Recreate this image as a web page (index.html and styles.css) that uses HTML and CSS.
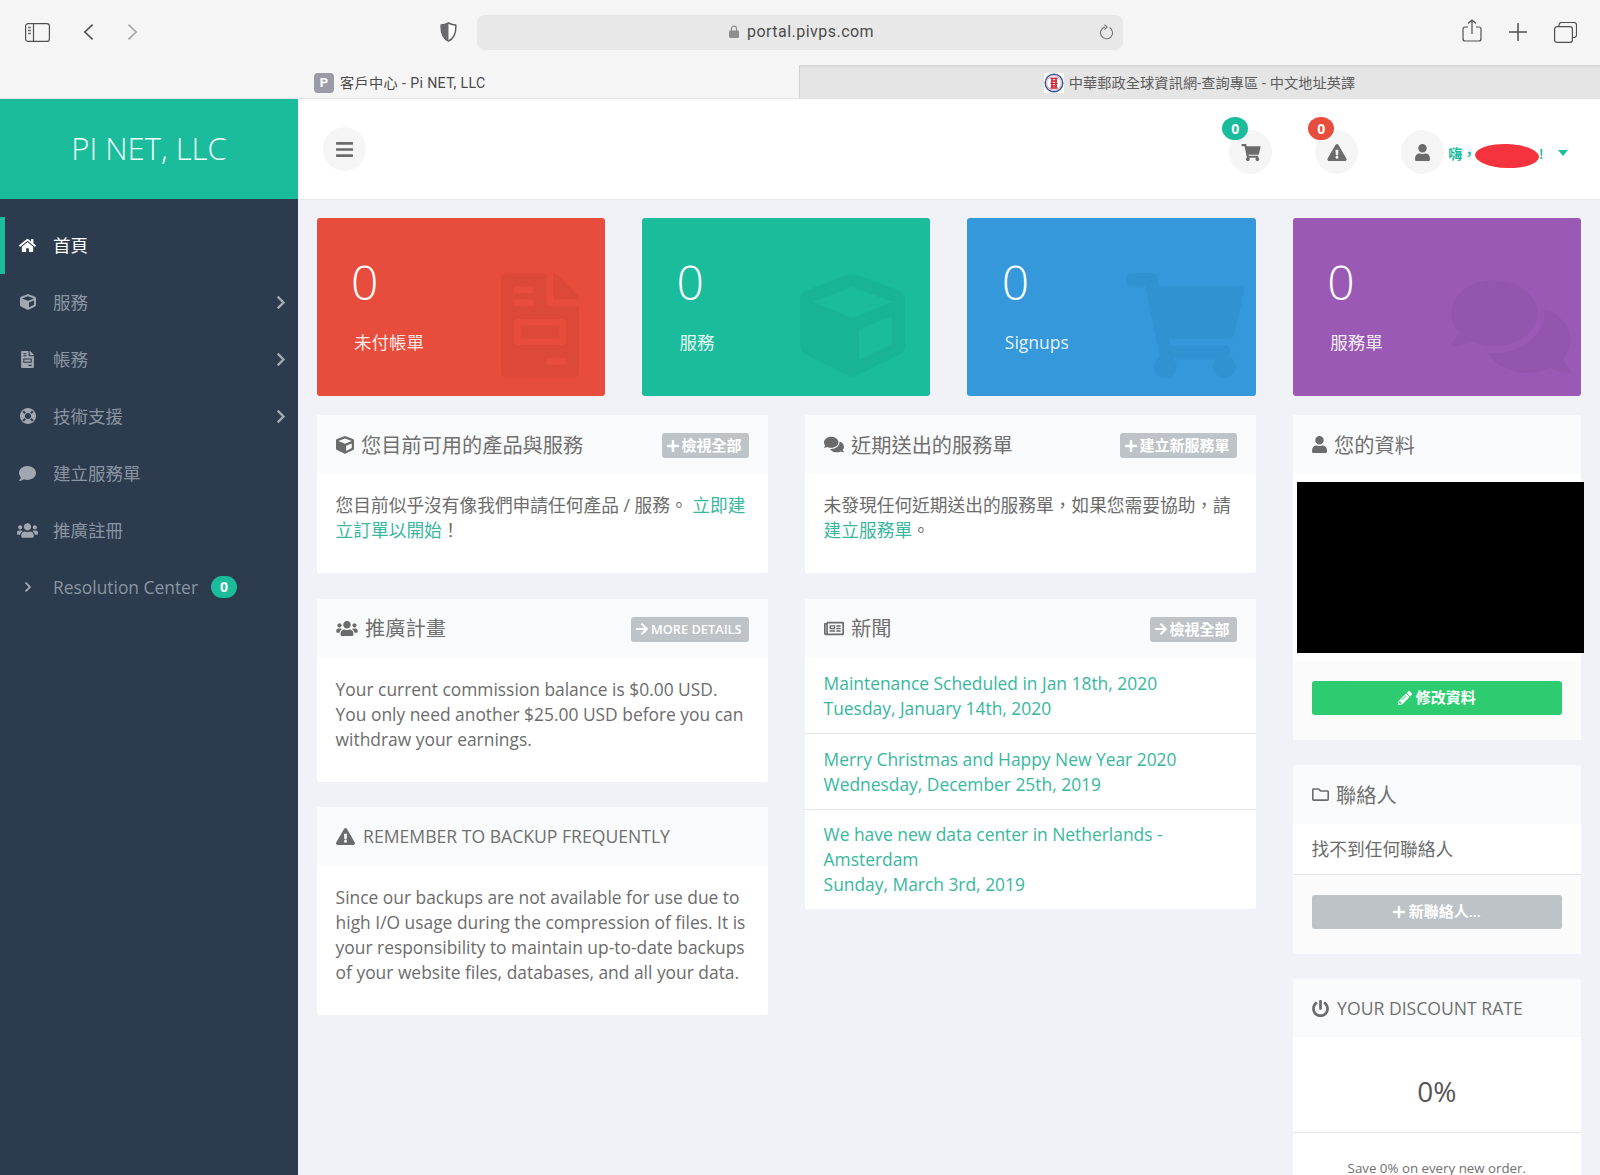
FILE: index.html
```html
<!DOCTYPE html>
<html lang="zh-Hant">
<head>
<meta charset="utf-8">
<title>客戶中心 - Pi NET, LLC</title>
<link rel="stylesheet" href="styles.css">
</head>
<body>
<svg class="defs" xmlns="http://www.w3.org/2000/svg">
  <symbol id="i-cube" viewBox="0 0 512 512"><path d="M239.1 6.3l-208 78c-18.7 7-31.1 25-31.1 45v225.1c0 18.2 10.3 34.8 26.5 42.9l208 104c13.5 6.8 29.4 6.8 42.9 0l208-104c16.3-8.1 26.5-24.8 26.5-42.9V129.3c0-20-12.4-37.9-31.1-44.9l-208-78C262 2.2 250 2.2 239.1 6.3zM256 68.4l192 72v1.1l-192 78-192-78v-1.1l192-72zm32 356V275.5l160-65v133.9l-160 80z"/></symbol>
  <symbol id="i-invoice" viewBox="0 0 384 512"><path d="M288 256H96v64h192v-64zm89-151L279.1 7c-4.5-4.5-10.6-7-17-7H256v128h128v-6.1c0-6.3-2.5-12.4-7-16.9zm-153 31V0H24C10.7 0 0 10.7 0 24v464c0 13.3 10.7 24 24 24h336c13.3 0 24-10.7 24-24V160H248c-13.2 0-24-10.8-24-24zM64 72c0-4.42 3.58-8 8-8h80c4.42 0 8 3.58 8 8v16c0 4.42-3.58 8-8 8H72c-4.42 0-8-3.58-8-8V72zm0 64c0-4.42 3.58-8 8-8h80c4.42 0 8 3.58 8 8v16c0 4.42-3.58 8-8 8H72c-4.42 0-8-3.58-8-8v-16zm256 304c0 4.42-3.58 8-8 8h-80c-4.42 0-8-3.58-8-8v-16c0-4.42 3.58-8 8-8h80c4.42 0 8 3.58 8 8v16zm0-200v96c0 8.84-7.16 16-16 16H80c-8.84 0-16-7.16-16-16v-96c0-8.84 7.16-16 16-16h224c8.84 0 16 7.16 16 16z"/></symbol>
  <symbol id="i-cart" viewBox="0 0 576 512"><path d="M528.12 301.319l47.273-208C578.806 78.301 567.391 64 551.99 64H159.208l-9.166-44.81C147.758 8.021 137.93 0 126.529 0H24C10.745 0 0 10.745 0 24v16c0 13.255 10.745 24 24 24h69.883l70.248 343.435C147.325 417.1 136 435.222 136 456c0 30.928 25.072 56 56 56s56-25.072 56-56c0-15.674-6.447-29.835-16.824-40h209.647C430.447 426.165 424 440.326 424 456c0 30.928 25.072 56 56 56s56-25.072 56-56c0-22.172-12.888-41.332-31.579-50.405l5.517-24.276c3.413-15.018-8.002-29.319-23.403-29.319H218.117l-6.545-32h293.145c11.206 0 20.92-7.754 23.403-18.681z"/></symbol>
  <symbol id="i-comments" viewBox="0 32 576 448"><path d="M416 192c0-88.4-93.1-160-208-160S0 103.6 0 192c0 34.3 14.1 65.9 38 92-13.4 30.2-35.5 54.2-35.8 54.5-2.2 2.3-2.8 5.7-1.5 8.7S4.8 352 8 352c36.6 0 66.9-12.3 88.7-25 32.2 15.7 70.3 25 111.3 25 114.9 0 208-71.6 208-160zm122 220c23.9-26 38-57.7 38-92 0-66.9-53.5-124.2-129.3-148.1.9 6.6 1.3 13.3 1.3 20.1 0 105.9-107.7 192-240 192-10.8 0-21.3-.8-31.7-1.9C207.8 439.6 281.8 480 368 480c41 0 79.1-9.2 111.3-25 21.8 12.7 52.1 25 88.7 25 3.2 0 6.1-1.9 7.3-4.8 1.3-2.9.7-6.3-1.5-8.7-.3-.3-22.4-24.2-35.8-54.5z"/></symbol>
  <symbol id="i-comment" viewBox="0 32 512 448"><path d="M256 32C114.6 32 0 125.1 0 240c0 49.6 21.4 95 57 130.7C44.5 421.1 2.7 466 2.2 466.5c-2.2 2.3-2.8 5.7-1.5 8.7S4.8 480 8 480c66.3 0 116-31.8 140.6-51.4 32.7 12.3 69 19.4 107.4 19.4 141.4 0 256-93.1 256-208S397.4 32 256 32z"/></symbol>
  <symbol id="i-users" viewBox="0 32 640 448"><path d="M96 224c35.3 0 64-28.7 64-64s-28.7-64-64-64-64 28.7-64 64 28.7 64 64 64zm448 0c35.3 0 64-28.7 64-64s-28.7-64-64-64-64 28.7-64 64 28.7 64 64 64zm32 32h-64c-17.6 0-33.5 7.1-45.1 18.6 40.3 22.1 68.9 62 75.1 109.4h66c17.7 0 32-14.3 32-32v-32c0-35.3-28.7-64-64-64zm-256 0c61.9 0 112-50.1 112-112S381.9 32 320 32 208 82.1 208 144s50.1 112 112 112zm76.8 32h-8.3c-20.8 10-43.9 16-68.5 16s-47.6-6-68.5-16h-8.3C179.6 288 128 339.6 128 403.2V432c0 26.5 21.5 48 48 48h288c26.5 0 48-21.5 48-48v-28.8c0-63.6-51.6-115.2-115.2-115.2zm-223.7-13.4C161.5 263.1 145.6 256 128 256H64c-35.3 0-64 28.7-64 64v32c0 17.7 14.3 32 32 32h65.9c6.3-47.4 34.9-87.3 75.2-109.4z"/></symbol>
  <symbol id="i-user" viewBox="0 0 448 512"><path d="M224 256c70.7 0 128-57.3 128-128S294.7 0 224 0 96 57.3 96 128s57.3 128 128 128zm89.6 32h-16.7c-22.2 10.2-46.9 16-72.9 16s-50.6-5.8-72.9-16h-16.7C60.2 288 0 348.2 0 422.4V464c0 26.5 21.5 48 48 48h352c26.5 0 48-21.5 48-48v-41.6c0-74.2-60.2-134.4-134.4-134.4z"/></symbol>
  <symbol id="i-warn" viewBox="0 0 576 512"><path d="M569.517 440.013C587.975 472.007 564.806 512 527.94 512H48.054c-36.937 0-59.999-40.055-41.577-71.987L246.423 23.985c18.467-32.009 64.72-31.951 83.154 0l239.94 416.028zM288 354c-25.405 0-46 20.595-46 46s20.595 46 46 46 46-20.595 46-46-20.595-46-46-46zm-43.673-165.346l7.418 136c.347 6.364 5.609 11.346 11.982 11.346h48.546c6.373 0 11.635-4.982 11.982-11.346l7.418-136c.375-6.874-5.098-12.654-11.982-12.654h-63.383c-6.884 0-12.356 5.78-11.981 12.654z"/></symbol>
  <symbol id="i-bars" viewBox="0 60 448 392"><path d="M16 132h416c8.837 0 16-7.163 16-16V76c0-8.837-7.163-16-16-16H16C7.163 60 0 67.163 0 76v40c0 8.837 7.163 16 16 16zm0 160h416c8.837 0 16-7.163 16-16v-40c0-8.837-7.163-16-16-16H16c-8.837 0-16 7.163-16 16v40c0 8.837 7.163 16 16 16zm0 160h416c8.837 0 16-7.163 16-16v-40c0-8.837-7.163-16-16-16H16c-8.837 0-16 7.163-16 16v40c0 8.837 7.163 16 16 16z"/></symbol>
  <symbol id="i-home" viewBox="0 32 576 448"><path d="M280.37 148.26L96 300.11V464a16 16 0 0 0 16 16l112.06-.29a16 16 0 0 0 15.92-16V368a16 16 0 0 1 16-16h64a16 16 0 0 1 16 16v95.64a16 16 0 0 0 16 16.05L464 480a16 16 0 0 0 16-16V300L295.67 148.26a12.19 12.19 0 0 0-15.3 0zM571.6 251.47L488 182.56V44.05a12 12 0 0 0-12-12h-56a12 12 0 0 0-12 12v72.61L318.47 43a48 48 0 0 0-61 0L4.34 251.47a12 12 0 0 0-1.6 16.9l25.5 31A12 12 0 0 0 45.15 301l235.22-193.74a12.19 12.19 0 0 1 15.3 0L530.9 301a12 12 0 0 0 16.9-1.6l25.5-31a12 12 0 0 0-1.7-16.93z"/></symbol>
  <symbol id="i-ring" viewBox="8 8 496 496"><path d="M256 8C119.033 8 8 119.033 8 256s111.033 248 248 248 248-111.033 248-248S392.967 8 256 8zm173.696 119.559l-63.399 63.399c-10.987-18.559-26.67-34.252-45.255-45.255l63.399-63.399a218.396 218.396 0 0 1 45.255 45.255zM256 352c-53.019 0-96-42.981-96-96s42.981-96 96-96 96 42.981 96 96-42.981 96-96 96zM127.559 82.304l63.399 63.399c-18.559 10.987-34.252 26.67-45.255 45.255l-63.399-63.399a218.372 218.372 0 0 1 45.255-45.255zM82.304 384.441l63.399-63.399c10.987 18.559 26.67 34.252 45.255 45.255l-63.399 63.399a218.396 218.396 0 0 1-45.255-45.255zm302.137 45.255l-63.399-63.399c18.559-10.987 34.252-26.67 45.255-45.255l63.399 63.399a218.403 218.403 0 0 1-45.255 45.255z"/></symbol>
  <symbol id="i-chev" viewBox="27 37 266 438"><path d="M285.476 272.971L91.132 467.314c-9.373 9.373-24.569 9.373-33.941 0l-22.667-22.667c-9.357-9.357-9.375-24.522-.04-33.901L188.505 256 34.484 101.255c-9.335-9.379-9.317-24.544.04-33.901l22.667-22.667c9.373-9.373 24.569-9.373 33.941 0L285.475 239.03c9.373 9.372 9.373 24.568.001 33.941z"/></symbol>
  <symbol id="i-plus" viewBox="0 32 448 448"><path d="M416 208H272V64c0-17.67-14.33-32-32-32h-32c-17.67 0-32 14.33-32 32v144H32c-17.67 0-32 14.33-32 32v32c0 17.67 14.33 32 32 32h144v144c0 17.67 14.33 32 32 32h32c17.67 0 32-14.33 32-32V304h144c17.67 0 32-14.33 32-32v-32c0-17.67-14.33-32-32-32z"/></symbol>
  <symbol id="i-arrow" viewBox="0 37 448 438"><path d="M190.5 66.9l22.2-22.2c9.4-9.4 24.6-9.4 33.9 0L441 239c9.4 9.4 9.4 24.6 0 33.9L246.6 467.3c-9.4 9.4-24.6 9.4-33.9 0l-22.2-22.2c-9.5-9.5-9.3-25 .4-34.3L311.4 296H24c-13.3 0-24-10.7-24-24v-32c0-13.3 10.7-24 24-24h287.4L190.9 101.2c-9.8-9.3-10-24.8-.4-34.3z"/></symbol>
  <symbol id="i-pencil" viewBox="0 0 512 512"><path d="M497.9 142.1l-46.1 46.1c-4.7 4.7-12.3 4.7-17 0l-111-111c-4.7-4.7-4.7-12.3 0-17l46.1-46.1c18.7-18.7 49.1-18.7 67.9 0l60.1 60.1c18.8 18.7 18.8 49.1 0 67.9zM284.2 99.8L21.6 362.4.4 483.9c-2.9 16.4 11.4 30.6 27.8 27.8l121.5-21.3 262.6-262.6c4.7-4.7 4.7-12.3 0-17l-111-111c-4.8-4.7-12.4-4.7-17.1 0zM124.1 339.9c-5.5-5.5-5.5-14.3 0-19.8l154-154c5.5-5.5 14.3-5.5 19.8 0s5.5 14.3 0 19.8l-154 154c-5.5 5.5-14.3 5.5-19.8 0zM88 424h48v36.3l-64.5 11.3-31.1-31.1L51.7 376H88v48z"/></symbol>
  <symbol id="i-power" viewBox="8 0 496 504"><path d="M400 54.1c63 45 104 118.6 104 201.9 0 136.8-110.8 247.7-247.5 248C120 504.3 8.2 393 8 256.4 7.9 173.1 48.9 99.3 111.8 54.2c11.7-8.3 28-4.8 35 7.7L162.6 90c5.9 10.5 3.1 23.8-6.6 31-41.5 30.8-68 79.6-68 134.9-.1 92.3 74.5 168.1 168 168.1 91.6 0 168.6-74.2 168-169.1-.3-51.8-24.7-101.8-68.1-134-9.7-7.2-12.4-20.5-6.5-30.9l15.8-28.1c7-12.4 23.2-16.1 34.8-7.8zM296 264V24c0-13.3-10.7-24-24-24h-32c-13.3 0-24 10.7-24 24v240c0 13.3 10.7 24 24 24h32c13.3 0 24-10.7 24-24z"/></symbol>
  <symbol id="i-folder" viewBox="0 64 512 384"><path d="M464 128H272l-54.63-54.63c-6-6-14.14-9.37-22.63-9.37H48C21.49 64 0 85.49 0 112v288c0 26.51 21.49 48 48 48h416c26.51 0 48-21.49 48-48V176c0-26.51-21.49-48-48-48zm0 272H48V112h140.12l54.63 54.63c6 6 14.14 9.37 22.63 9.37H464v224z"/></symbol>
  <symbol id="i-news" viewBox="0 64 576 384"><path d="M552 64H112c-20.858 0-38.643 13.377-45.248 32H24c-13.255 0-24 10.745-24 24v272c0 30.928 25.072 56 56 56h496c13.255 0 24-10.745 24-24V88c0-13.255-10.745-24-24-24zM48 392V144h16v248c0 4.411-3.589 8-8 8s-8-3.589-8-8zm480 8H111.422c.374-2.614.578-5.283.578-8V112h416v288zM172 280h136c6.627 0 12-5.373 12-12v-96c0-6.627-5.373-12-12-12H172c-6.627 0-12 5.373-12 12v96c0 6.627 5.373 12 12 12zm28-80h80v40h-80v-40zm-40 140v-24c0-6.627 5.373-12 12-12h136c6.627 0 12 5.373 12 12v24c0 6.627-5.373 12-12 12H172c-6.627 0-12-5.373-12-12zm192 0v-24c0-6.627 5.373-12 12-12h104c6.627 0 12 5.373 12 12v24c0 6.627-5.373 12-12 12H364c-6.627 0-12-5.373-12-12zm0-144v-24c0-6.627 5.373-12 12-12h104c6.627 0 12 5.373 12 12v24c0 6.627-5.373 12-12 12H364c-6.627 0-12-5.373-12-12zm0 72v-24c0-6.627 5.373-12 12-12h104c6.627 0 12 5.373 12 12v24c0 6.627-5.373 12-12 12H364c-6.627 0-12-5.373-12-12z"/></symbol>
</svg>

<header class="chrome">
  <div class="toolbar">
    <div class="tool-left">
      <svg class="t-sidebar" viewBox="0 0 25 19"><rect x=".6" y=".6" width="23.8" height="17.8" rx="2.5" fill="none" stroke="#4f4f52" stroke-width="1.2"/><path d="M8.5 .6v17.8" stroke="#4f4f52" stroke-width="1.2"/><path d="M3 4.5h3M3 7.5h3M3 10.5h3" stroke="#6e6e72" stroke-width="1.3"/></svg>
      <svg class="t-back" viewBox="0 0 12 18"><path d="M10.5 1L2 9l8.500 8" fill="none" stroke="#4f4f52" stroke-width="1.7"/></svg>
      <svg class="t-fwd" viewBox="0 0 12 18"><path d="M1.5 1L10 9l-8.500 8" fill="none" stroke="#a5a5a8" stroke-width="1.7"/></svg>
    </div>
    <svg class="t-shield" viewBox="0 0 17 20"><path d="M8.5 1c2.5 1.4 4.8 2 7.3 2.1.4 7.500-1.800 13.400-7.300 15.900C3 16.500.8 10.600 1.200 3.100 3.700 3 6 2.400 8.500 1z" fill="#fff" stroke="#5f5f62" stroke-width="1.500"/><path d="M8.500 1c-2.500 1.400-4.800 2-7.300 2.100C.8 10.600 3 16.500 8.500 19z" fill="#6a6a6e"/></svg>
    <div class="address">
      <svg class="t-lock" viewBox="0 0 10 13"><path d="M2.500 6V3.700a2.500 2.500 0 0 1 5 0V6" fill="none" stroke="#8e8e91" stroke-width="1.200"/><rect y="5.500" width="10" height="7.500" rx="1.300" fill="#8e8e91"/></svg>
      <span class="url">portal.pivps.com</span>
      <svg class="t-reload" viewBox="0 0 14 16"><path d="M9.500 3.600A6 6 0 1 1 5 3" fill="none" stroke="#727275" stroke-width="1.100"/><path d="M4.500 .6L7.200 3 4.500 5.500" fill="none" stroke="#727275" stroke-width="1.100"/></svg>
    </div>
    <div class="tool-right">
      <svg class="t-share" viewBox="0 0 20 23"><path d="M6 8H3a2 2 0 0 0-2 2v10a2 2 0 0 0 2 2h14a2 2 0 0 0 2-2V10a2 2 0 0 0-2-2h-3" fill="none" stroke="#4f4f52" stroke-width="1.200"/><path d="M10 15V1M6 4.500L10 1l4 3.500" fill="none" stroke="#4f4f52" stroke-width="1.200"/></svg>
      <svg class="t-plus" viewBox="0 0 18 18"><path d="M9 0v18M0 9h18" stroke="#4f4f52" stroke-width="1.500"/></svg>
      <svg class="t-tabs" viewBox="0 0 23 21"><path d="M5 4.500V3a2.500 2.500 0 0 1 2.500-2.500H20A2.500 2.500 0 0 1 22.500 3v10a2.500 2.500 0 0 1-2.500 2.500h-1.500" fill="none" stroke="#4f4f52" stroke-width="1.200"/><rect x=".6" y="4.600" width="17.800" height="15.800" rx="2.500" fill="none" stroke="#4f4f52" stroke-width="1.200"/></svg>
    </div>
  </div>
  <div class="tabs">
    <div class="tab tab-active"><span class="fav-p">P</span><span>客戶中心 - Pi NET, LLC</span></div>
    <div class="tab tab-other">
      <svg class="fav-post" viewBox="0 0 20 20"><rect width="20" height="20" fill="#fff"/><circle cx="10" cy="10" r="8.800" fill="none" stroke="#33569c" stroke-width="1.400"/><circle cx="10" cy="10" r="7.300" fill="none" stroke="#d9a7ad" stroke-width="1"/><path d="M6.500 5.500h7M7 8h6M6.500 10.500h7M7 13h6M6.500 15h7M8 4.500v11M12 4.500v11" stroke="#c8202f" stroke-width="1.300" fill="none"/></svg>
      <span>中華郵政全球資訊網-查詢專區 - 中文地址英譯</span>
    </div>
  </div>
</header>

<div class="app">
  <aside class="sidebar">
    <div class="brand">PI NET, LLC</div>
    <nav class="nav">
      <a class="nav-item active"><span class="nav-ic"><svg class="ic w17"><use href="#i-home"/></svg></span><span class="nav-zh">首頁</span></a>
      <a class="nav-item"><span class="nav-ic"><svg class="ic w16"><use href="#i-cube"/></svg></span><span class="nav-zh">服務</span><svg class="ic nav-chev"><use href="#i-chev"/></svg></a>
      <a class="nav-item"><span class="nav-ic"><svg class="ic w13"><use href="#i-invoice"/></svg></span><span class="nav-zh">帳務</span><svg class="ic nav-chev"><use href="#i-chev"/></svg></a>
      <a class="nav-item"><span class="nav-ic"><svg class="ic w16"><use href="#i-ring"/></svg></span><span class="nav-zh">技術支援</span><svg class="ic nav-chev"><use href="#i-chev"/></svg></a>
      <a class="nav-item"><span class="nav-ic"><svg class="ic w17"><use href="#i-comment"/></svg></span><span class="nav-zh">建立服務單</span></a>
      <a class="nav-item"><span class="nav-ic"><svg class="ic w21"><use href="#i-users"/></svg></span><span class="nav-zh">推廣註冊</span></a>
      <a class="nav-item"><span class="nav-ic"><svg class="ic w6"><use href="#i-chev"/></svg></span><span>Resolution Center</span><span class="nav-badge">0</span></a>
    </nav>
  </aside>

  <main class="main">
    <div class="topbar">
      <div class="round menu"><svg class="ic w17"><use href="#i-bars"/></svg></div>
      <div class="top-right">
        <div class="round"><span class="count teal">0</span><svg class="ic w20"><use href="#i-cart"/></svg></div>
        <div class="round"><span class="count red">0</span><svg class="ic w20"><use href="#i-warn"/></svg></div>
        <div class="round"><svg class="ic w15"><use href="#i-user"/></svg></div>
        <div class="user-name">嗨，<span class="redact"></span>!<span class="caret"></span></div>
      </div>
    </div>

    <div class="content">
      <section class="stats">
        <div class="stat s-red"><div class="stat-num">0</div><div class="stat-label">未付帳單</div><svg class="stat-ic si-file"><use href="#i-invoice"/></svg></div>
        <div class="stat s-teal"><div class="stat-num">0</div><div class="stat-label">服務</div><svg class="stat-ic si-cube"><use href="#i-cube"/></svg></div>
        <div class="stat s-blue"><div class="stat-num">0</div><div class="stat-label">Signups</div><svg class="stat-ic si-cart"><use href="#i-cart"/></svg></div>
        <div class="stat s-purple"><div class="stat-num">0</div><div class="stat-label">服務單</div><svg class="stat-ic si-chat"><use href="#i-comments"/></svg></div>
      </section>

      <section class="columns">
        <div class="col">
          <article class="panel">
            <div class="panel-head"><svg class="ic w18"><use href="#i-cube"/></svg><h3>您目前可用的產品與服務</h3><a class="mini-btn"><svg class="ic w12"><use href="#i-plus"/></svg>檢視全部</a></div>
            <div class="panel-body"><p class="zh">您目前似乎沒有像我們申請任何產品 / 服務。 <a class="link">立即建立訂單以開始</a>！</p></div>
          </article>
          <article class="panel">
            <div class="panel-head"><svg class="ic w22"><use href="#i-users"/></svg><h3>推廣計畫</h3><a class="mini-btn"><svg class="ic w12"><use href="#i-arrow"/></svg><span class="en">MORE DETAILS</span></a></div>
            <div class="panel-body"><p>Your current commission balance is $0.00 USD.<br>You only need another $25.00 USD before you can withdraw your earnings.</p></div>
          </article>
          <article class="panel">
            <div class="panel-head"><svg class="ic w19"><use href="#i-warn"/></svg><h3 class="en-title">REMEMBER TO BACKUP FREQUENTLY</h3></div>
            <div class="panel-body"><p>Since our backups are not available for use due to high I/O usage during the compression of files. It is your responsibility to maintain up-to-date backups of your website files, databases, and all your data.</p></div>
          </article>
        </div>

        <div class="col">
          <article class="panel">
            <div class="panel-head"><svg class="ic w20"><use href="#i-comments"/></svg><h3>近期送出的服務單</h3><a class="mini-btn"><svg class="ic w12"><use href="#i-plus"/></svg>建立新服務單</a></div>
            <div class="panel-body"><p class="zh">未發現任何近期送出的服務單，如果您需要協助，請<a class="link">建立服務單</a>。</p></div>
          </article>
          <article class="panel">
            <div class="panel-head"><svg class="ic w20"><use href="#i-news"/></svg><h3>新聞</h3><a class="mini-btn"><svg class="ic w12"><use href="#i-arrow"/></svg>檢視全部</a></div>
            <div class="news">
              <a class="news-item">Maintenance Scheduled in Jan 18th, 2020<br>Tuesday, January 14th, 2020</a>
              <a class="news-item">Merry Christmas and Happy New Year 2020<br>Wednesday, December 25th, 2019</a>
              <a class="news-item">We have new data center in Netherlands - Amsterdam<br>Sunday, March 3rd, 2019</a>
            </div>
          </article>
        </div>

        <div class="col col-side">
          <article class="panel">
            <div class="panel-head"><svg class="ic w15"><use href="#i-user"/></svg><h3>您的資料</h3></div>
            <div class="profile-body"><div class="profile-black"></div></div>
            <div class="panel-foot"><a class="wide-btn green"><svg class="ic w14"><use href="#i-pencil"/></svg><span>修改資料</span></a></div>
          </article>
          <article class="panel">
            <div class="panel-head"><svg class="ic w17"><use href="#i-folder"/></svg><h3>聯絡人</h3></div>
            <div class="contact-row zh">找不到任何聯絡人</div>
            <div class="panel-foot"><a class="wide-btn grey"><svg class="ic w12"><use href="#i-plus"/></svg><span>新聯絡人...</span></a></div>
          </article>
          <article class="panel">
            <div class="panel-head head-58"><svg class="ic w17p"><use href="#i-power"/></svg><h3 class="en-title">YOUR DISCOUNT RATE</h3></div>
            <div class="rate">0%</div>
            <div class="rate-note">Save 0% on every new order.</div>
          </article>
        </div>
      </section>
    </div>
  </main>
</div>
</body>
</html>
```

FILE: styles.css
```css
* { box-sizing: border-box; }
html, body { height: 100%; }
body {
  margin: 0;
  height: 100vh;
  overflow: hidden;
  display: flex;
  flex-direction: column;
  background: #f0f2f8;
  color: #6c6c6c;
  font-family: "Open Sans", "Noto Sans CJK TC", sans-serif;
  font-size: 17.4px;
  line-height: 25px;
}
a { color: inherit; text-decoration: none; }
p { margin: 0 0 11px; }
h3 { margin: 0; font-weight: 400; font-size: 20.2px; line-height: 28px; color: #707070; }
.zh { font-size: 17.72px; }
.nav-zh { font-size: 17.5px; }
.defs { display: none; }

.ic { display: block; fill: currentColor; flex-shrink: 0; }
.w6 { width: 6px; height: 10px; }
.w12 { width: 12px; height: 12px; }
.w13 { width: 13px; height: 17px; }
.w14 { width: 14px; height: 14px; }
.w15 { width: 15px; height: 17px; }
.w16 { width: 16px; height: 16px; }
.w17 { width: 17px; height: 15px; }
.w17p { width: 17px; height: 17px; }
.w18 { width: 18px; height: 18px; }
.w19 { width: 19px; height: 17px; }
.w20 { width: 20px; height: 17px; }
.w21 { width: 21px; height: 15px; }
.w22 { width: 22px; height: 15px; }

/* browser chrome */
.chrome { flex: 0 0 99px; background: #f6f5f6; font-family: "Roboto", "Noto Sans CJK TC", sans-serif; color: #4a4a4a; }
.toolbar { height: 65px; display: flex; align-items: center; padding: 0 23px 1px 25px; }
.tool-left { display: flex; align-items: center; width: 415px; }
.t-sidebar { width: 25px; height: 19px; margin-right: 33px; }
.t-back, .t-fwd { width: 11px; height: 18px; }
.t-fwd { margin-left: 33px; }
.t-shield { width: 17px; height: 20px; margin-right: 20px; }
.address { width: 646px; height: 35px; border-radius: 8px; background: #e9e8e9; display: flex; align-items: center; padding: 0 9px 1px 252px; font-size: 16px; }
.t-lock { width: 10px; height: 13px; margin-right: 8px; }
.url { letter-spacing: .47px; color: #4c4c4c; flex: 1; }
.t-reload { width: 14px; height: 16px; }
.tool-right { margin-left: auto; display: flex; align-items: center; }
.t-share { width: 20px; height: 23px; margin-top: -3px; }
.t-plus { width: 18px; height: 18px; margin-left: 27px; }
.t-tabs { width: 23px; height: 21px; margin-left: 27px; }
.tabs { height: 34px; display: flex; font-size: 14.2px; line-height: 20px; }
.tab { display: flex; align-items: center; padding-top: 1px; }
.tab-active { flex: 0 0 799px; padding-left: 314px; gap: 6px; color: #4a4a4a; letter-spacing: .35px; }
.tab-other { flex: 1; justify-content: center; gap: 5px; padding-right: 1px; background: #e6e5e6; border-left: 1px solid #cfcfcf; border-top: 1px solid #d6d6d6; box-shadow: inset 0 1px 1px #ddd; color: #5c5c5c; letter-spacing: .1px; }
.fav-p { width: 20px; height: 20px; border-radius: 4px; background: #9a9ba6; color: #fff; font-weight: 700; font-size: 13px; line-height: 20px; text-align: center; letter-spacing: 0; }
.fav-post { width: 20px; height: 20px; }

/* app shell */
.app { flex: 1; min-height: 0; display: flex; border-top: 1px solid #e3e3e4; margin-top: -1px; }
.sidebar { flex: 0 0 298px; background: #2c3b4d; }
.brand { height: 100px; background: #1abc9c; color: #f0fdfa; font-size: 31px; line-height: 99px; text-align: center; font-weight: 300; }
.nav { padding-top: 17.6px; }
.nav-item { height: 57px; display: flex; align-items: center; padding-right: 13px; color: #8a95a1; border-left: 5px solid transparent; }
.nav-item.active { color: #fff; border-left-color: #1abc9c; }
.nav-ic { width: 48px; display: flex; justify-content: center; padding-right: 3px; color: #a0a7b0; }
.active .nav-ic { color: #fff; }
.nav-chev { width: 8px; height: 13px; margin-left: auto; color: #a3a9b1; }
.nav-badge { width: 26px; height: 22px; margin-left: 13px; border-radius: 11px; background: #1abc9c; color: #fff; font-size: 14px; font-weight: 700; line-height: 22px; text-align: center; }

.main { flex: 1; min-width: 0; display: flex; flex-direction: column; }
.topbar { flex: 0 0 101px; padding: 0 32px 0 25px; background: #fff; border-bottom: 1px solid #e6e8ec; display: flex; align-items: center; color: #6b6b6b; }
.round { width: 43px; height: 44px; border-radius: 50%; background: #f5f5f5; display: flex; align-items: center; justify-content: center; position: relative; }
.top-right { margin-left: auto; margin-top: 6px; display: flex; align-items: center; gap: 43px; }
.count { position: absolute; left: -7px; top: -13px; width: 26px; height: 23px; border-radius: 50%; color: #fff; font-size: 14px; font-weight: 700; line-height: 23px; text-align: center; }
.teal { background: #1abc9c; }
.red { background: #e74c3c; }
.user-name { display: flex; align-items: center; margin-left: -39px; margin-top: 2px; font-size: 14px; font-weight: 600; color: #1abc9c; }
.redact { width: 64px; height: 24px; margin: 0 0 0 -1px; border-radius: 50%; background: #f5333f; transform: translateY(3px) rotate(2deg); }
.caret { margin: 0 0 0 15px; border: 5px solid transparent; border-top: 6px solid #1abc9c; border-bottom: 0; }

/* content */
.content { flex: 1; min-height: 0; padding: 18px 19px 0 18.6px; overflow: hidden; }
.stats { display: grid; grid-template-columns: repeat(4, 1fr); gap: 37px; }
.stat { position: relative; height: 178px; border-radius: 3px; padding: 36px 0 0 37.5px; color: #fff; overflow: hidden; }
.s-red { background: #e74c3c; }
.s-teal { background: #1abc9c; }
.s-blue { background: #3498db; }
.s-purple { background: #9b59b6; }
.stat-num { font-size: 48px; line-height: 56px; font-weight: 300; margin-left: -3px; }
.stat-label { margin-top: 20px; font-size: 17.500px; line-height: 25px; color: rgba(255,255,255,.9); }
.stat-ic { position: absolute; fill: rgba(0,0,0,.04); }
.si-file { width: 78px; height: 105px; right: 26px; top: 55px; }
.si-cube { width: 105px; height: 105px; right: 25px; top: 55px; }
.si-cart { width: 118px; height: 105px; right: 12px; top: 55px; }
.si-chat { width: 120px; height: 93px; right: 10px; top: 62px; }

.columns { display: grid; grid-template-columns: 1fr 1fr 288.400px; gap: 37px; margin-top: 19px; align-items: start; }
.col { display: flex; flex-direction: column; gap: 25.6px; }
.col-side { gap: 25px; }
.panel { background: #fff; border-radius: 3px; }
.panel-head { height: 59px; display: flex; align-items: center; gap: 7.5px; padding: 0 19px; background: #f9fafb; border-radius: 3px 3px 0 0; color: #6b6b6b; }
.panel-head .en-title { font-size: 17.6px; margin: -1px 0 0 1px; }
.head-58 { height: 58px; }
.mini-btn { margin: 2px 0 0 auto; height: 25px; display: flex; align-items: center; gap: 3px; padding: 0 7px 0 5px; border-radius: 3px; background: #bdc3c7; color: #fff; font-size: 15px; font-weight: 600; line-height: 25px; }
.mini-btn .en { font-size: 12.8px; }
.panel-body { padding: 19px; }
.link { color: #38b79e; }
.news-item { display: block; padding: 12.5px 19px 12px; border-bottom: 1px solid #e4e6e8; color: #38b79e; }
.news-item:first-child { padding-top: 13.5px; }
.news-item:last-child { border-bottom: 0; }

.profile-body { padding: 8px 0 8px 4px; }
.profile-black { width: 287px; height: 171px; background: #000; }
.panel-foot { padding: 20px 19px 25px; background: #fbfbfc; }
.wide-btn { height: 34px; display: flex; align-items: center; justify-content: center; gap: 4px; border-radius: 3px; color: #fff; font-size: 15px; font-weight: 600; }
.wide-btn span { margin-top: -2px; }
.green { background: #2ecc71; }
.grey { background: #bdc3c7; }
.contact-row { height: 51px; padding: 0 19px; display: flex; align-items: center; border-bottom: 1px solid #e6e7e9; }
.rate { height: 96px; padding-top: 14px; display: flex; align-items: center; justify-content: center; border-bottom: 1px solid #e6e7e9; font-size: 28px; font-weight: 400; color: #555; }
.rate-note { padding-top: 23px; text-align: center; font-size: 13.300px; color: #6f6f6f; }
```
